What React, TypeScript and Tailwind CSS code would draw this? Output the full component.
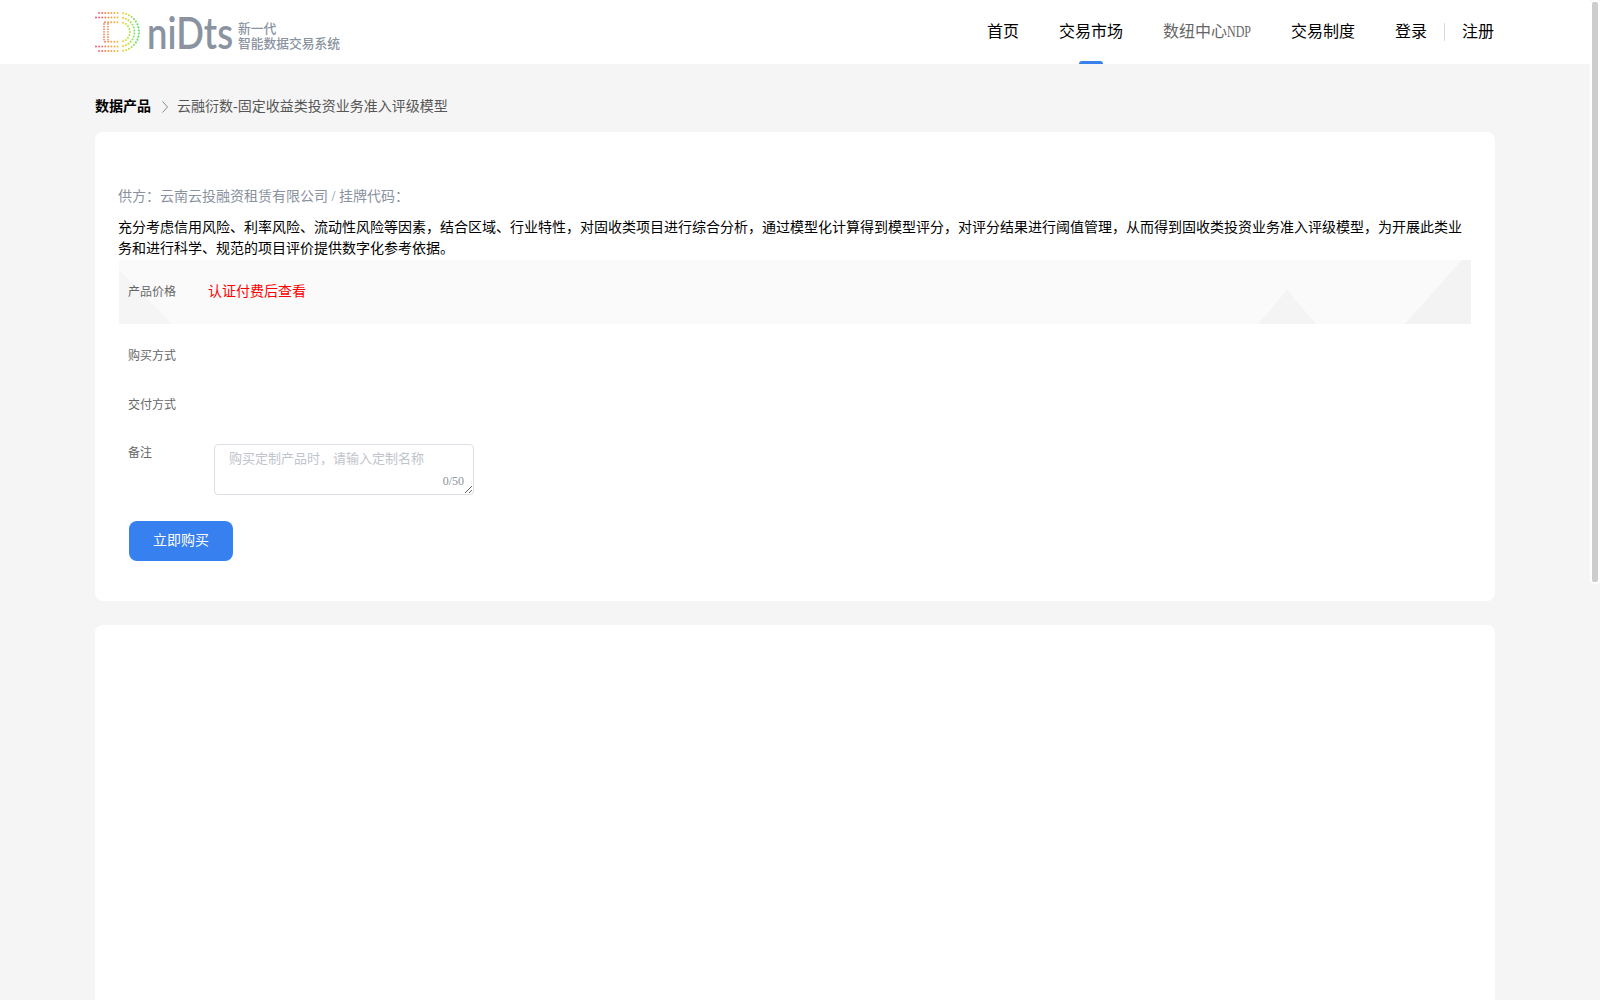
const FONT = "font-['Liberation_Serif','Noto_Sans_CJK_SC',serif]"

// 标志左侧的点阵 D
const STOPS = [
  [240, 82, 138],
  [249, 160, 75],
  [230, 221, 60],
  [79, 220, 122],
]

function dotColor(x: number) {
  const t = Math.min(Math.max((x - 1) / 44, 0), 0.999) * (STOPS.length - 1)
  const i = Math.floor(t)
  const f = t - i
  const [r, g, b] = STOPS[i].map((v, n) => Math.round(v + (STOPS[i + 1][n] - v) * f))
  return `rgb(${r},${g},${b})`
}

function buildDots() {
  const dots: { x: number; y: number; r: number }[] = []
  const cx = 25
  const cy = 20
  ;[0, 1, 2].forEach((k) => {
    const radius = 19 - k * 4.6
    const start = k === 1 ? 1 : 4 + k * 3
    for (let x = start; x <= cx; x += 3.1) {
      dots.push({ x, y: cy - radius, r: 1 })
      dots.push({ x, y: cy + radius, r: 1 })
    }
    const steps = Math.round((Math.PI * radius) / 3.1)
    for (let i = 1; i < steps; i++) {
      const a = -Math.PI / 2 + (Math.PI * i) / steps
      dots.push({ x: cx + radius * Math.cos(a), y: cy + radius * Math.sin(a), r: 1.05 })
    }
  })
  for (let y = 12; y <= 28; y += 2.6) {
    dots.push({ x: 9, y, r: 0.9 })
    dots.push({ x: 13, y, r: 0.9 })
  }
  return dots
}

function Logo() {
  return (
    <div className="flex items-center">
      <svg width="46" height="41" viewBox="0 0 46 41" className="shrink-0">
        {buildDots().map((d, i) => (
          <circle key={i} cx={d.x} cy={d.y} r={d.r} fill={dotColor(d.x)} />
        ))}
      </svg>
      <span className="ml-[6px] inline-block w-[90px] origin-left scale-x-[0.81] font-['Lato',sans-serif] text-[45px] leading-[40px] font-semibold text-[#8a939f]">
        niDts
      </span>
      <div className="mt-[6px] ml-[1px] flex flex-col font-['Noto_Sans_CJK_SC',sans-serif] text-[12.75px] leading-[15px] font-medium text-[#8a939f]">
        <span>新一代</span>
        <span>智能数据交易系统</span>
      </div>
    </div>
  )
}

function NavItem({ label, active, muted, suffix }: { label: string; active?: boolean; muted?: boolean; suffix?: string }) {
  return (
    <a className={`relative flex h-16 items-center ${muted ? 'text-[#666666]' : 'text-black'}`}>
      {label}
      {suffix && <span className="mr-[-8px] inline-block origin-left scale-x-75">{suffix}</span>}
      {active && (
        <span className="absolute bottom-0 left-1/2 h-[3px] w-6 -translate-x-1/2 rounded-t-sm bg-[#3780f0]" />
      )}
    </a>
  )
}

function Header() {
  return (
    <header className="h-16 bg-white">
      <div className="mx-auto flex h-16 w-[1400px] items-center justify-between">
        <Logo />
        <nav className="mr-px flex items-center gap-10 text-base">
          <NavItem label="首页" />
          <NavItem label="交易市场" active />
          <NavItem label="数纽中心" suffix="NDP" muted />
          <NavItem label="交易制度" />
          <div className="flex items-center text-black">
            <span>登录</span>
            <span className="mx-[17px] h-[18px] w-px bg-[#d8d8d8]" />
            <span>注册</span>
          </div>
        </nav>
      </div>
    </header>
  )
}

function PriceBand() {
  return (
    <div className="relative ml-px flex h-16 w-[1352px] items-center overflow-hidden bg-[#fafafa] pl-[9px]">
      <svg className="absolute inset-0" width="1352" height="64" viewBox="0 0 1352 64">
        <polygon points="0,10 53,64 0,64" fill="#f5f5f5" />
        <polygon points="1139,64 1168,30 1197,64" fill="#f4f4f4" />
        <polygon points="1286,64 1343,0 1352,0 1352,64" fill="#f3f3f3" />
      </svg>
      <span className="relative w-[80px] text-xs text-[#666666]">产品价格</span>
      <span className="relative text-sm text-[#ff0000]">认证付费后查看</span>
    </div>
  )
}

function Field({ label }: { label: string }) {
  return <div className="flex h-12 items-center pl-[10px] text-xs text-[#666666]">{label}</div>
}

export default function App() {
  return (
    <div className={`flex h-[1000px] overflow-hidden bg-[#f5f5f5] ${FONT}`}>
      <div className="w-[1590px] shrink-0">
        <Header />
        <main className="mx-auto w-[1400px]">
          <div className="flex h-[68px] items-center pt-[17px] text-sm">
            <span className="font-bold text-black">数据产品</span>
            <svg width="10" height="12" viewBox="0 0 10 12" className="mx-2 shrink-0 text-[#888888]">
              <path d="M3.5 0.5 L8.5 6 L3.5 11.5" fill="none" stroke="currentColor" strokeWidth="1" />
            </svg>
            <span className="text-[#555555]">云融衍数-固定收益类投资业务准入评级模型</span>
          </div>

          <section className="rounded-lg bg-white px-[23px] pt-[55px] pb-10">
            <p className="text-sm leading-5 text-[#8a919f]">供方：云南云投融资租赁有限公司 / 挂牌代码：</p>
            <p className="mt-[10px] text-sm leading-[21px] text-black">
              充分考虑信用风险、利率风险、流动性风险等因素，结合区域、行业特性，对固收类项目进行综合分析，通过模型化计算得到模型评分，对评分结果进行阈值管理，从而得到固收类投资业务准入评级模型，为开展此类业务和进行科学、规范的项目评价提供数字化参考依据。
            </p>
            <div className="mt-px">
              <PriceBand />
            </div>
            <div className="mt-[8px] flex flex-col gap-px">
              <Field label="购买方式" />
              <Field label="交付方式" />
            </div>
            <div className="mt-[15px] flex pl-[10px]">
              <span className="mt-px w-[86px] text-xs leading-4 text-[#666666]">备注</span>
              <div className="relative h-[51px] w-[260px]">
                <textarea
                  placeholder="购买定制产品时，请输入定制名称"
                  className="block h-[51px] w-[260px] rounded border border-[#dcdfe6] px-[14px] py-[4px] text-[13px] leading-5 outline-none placeholder:text-[#c0c4cc]"
                />
                <span className="absolute right-[10px] bottom-[6px] text-xs leading-4 text-[#909399]">0/50</span>
              </div>
            </div>
            <button className="mt-[26px] ml-[11px] flex h-10 w-[104px] items-center justify-center rounded-lg bg-[#3780f0] pb-px text-sm text-white">
              立即购买
            </button>
          </section>

          <section className="mt-6 h-[500px] rounded-lg bg-white" />
        </main>
      </div>

      {/* 滚动条 */}
      <div className="w-[10px] shrink-0">
        <div className="h-[584px] w-[10px] rounded-[4px] border-2 border-white bg-[#cdcdcd]" />
      </div>
    </div>
  )
}
